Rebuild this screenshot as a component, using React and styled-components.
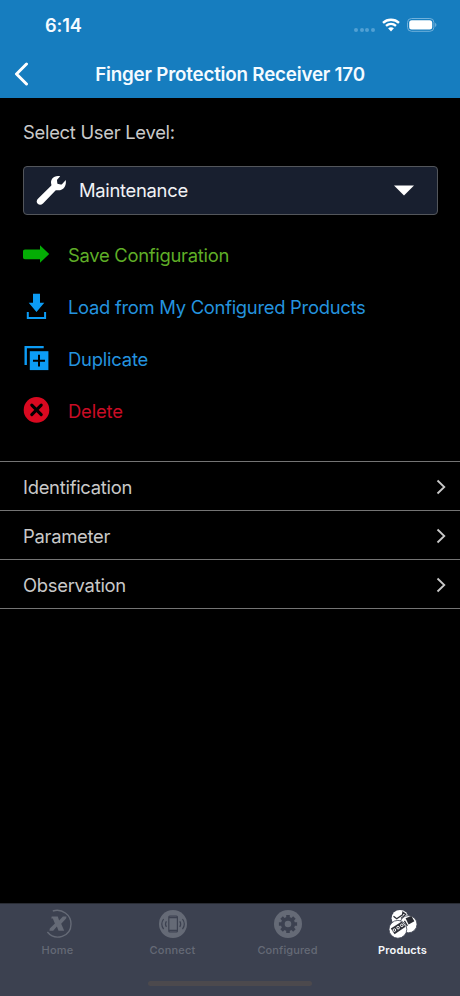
import React from "react";
import styled, { createGlobalStyle } from "styled-components";

const GlobalStyle = createGlobalStyle`
  * { box-sizing: border-box; }
  body { margin: 0; background: #000; }
  button { font: inherit; color: inherit; background: none; border: 0; padding: 0; text-align: left; }
  svg { display: block; flex: none; }
`;

const Screen = styled.div`
  width: 460px;
  height: 996px;
  display: flex;
  flex-direction: column;
  overflow: hidden;
  background: #000;
  font-family: Inter, "Liberation Sans", sans-serif;
  font-size: 18.4px;
  line-height: 24px;
  color: #c9c9c9;
`;

const Header = styled.header`
  height: 98px;
  flex: none;
  background: #167dbf;
  color: #f4fbff;
`;

const StatusBar = styled.div`
  height: 50px;
  padding: 0 23px 0 45px;
  display: flex;
  align-items: center;
  justify-content: space-between;
`;

const Clock = styled.span`
  font-size: 18.2px;
  font-weight: 600;
  letter-spacing: -0.1px;
`;

const StatusIcons = styled.div`
  display: flex;
  align-items: center;
`;

const Dots = styled.div`
  display: flex;
  gap: 1.7px;
  margin: 9px 7px 0 0;
`;

const Dot = styled.i`
  width: 4px;
  height: 4px;
  border-radius: 50%;
  background: #51a0d4;
`;

const TitleBar = styled.div`
  height: 48px;
  display: grid;
  grid-template-columns: 46px 1fr 46px;
  align-items: center;
`;

const BackButton = styled.button`
  padding-left: 14px;
`;

const Title = styled.h1`
  margin: 0;
  padding-top: 1px;
  text-align: center;
  white-space: nowrap;
  font-size: 18.8px;
  font-weight: 600;
  letter-spacing: -0.2px;
`;

const Main = styled.main`
  flex: 1;
`;

const Label = styled.div`
  padding: 22px 23px 0;
  height: 68px;
  letter-spacing: -0.28px;
`;

const Select = styled.button`
  width: 415px;
  height: 49px;
  margin-left: 22.5px;
  padding: 0 22.5px 0 12px;
  display: flex;
  align-items: center;
  border: 1px solid #53565b;
  border-radius: 4px;
  background: #181f2f;
  color: #f1f2f5;
`;

const SelectValue = styled.span`
  flex: 1;
  margin-left: 12.5px;
  padding-bottom: 2px;
  letter-spacing: -0.3px;
`;

const Actions = styled.div`
  padding: 14px 22px 0;
  height: 246px;
`;

const Action = styled.button`
  width: 100%;
  height: 51.8px;
  display: flex;
  align-items: center;
  gap: 18px;
  color: ${(p) => p.$color};
  letter-spacing: ${(p) => p.$tracking}px;

  span { padding-top: 1px; }
`;

const Menu = styled.nav`
  border-top: 1px solid #747474;
`;

const MenuRow = styled.button`
  width: 100%;
  height: 49px;
  padding: 2px 14px 0 23px;
  display: flex;
  align-items: center;
  justify-content: space-between;
  border-bottom: 1px solid #747474;
  letter-spacing: ${(p) => p.$tracking}px;
`;

const Footer = styled.footer`
  height: 93px;
  flex: none;
  display: flex;
  flex-direction: column;
  align-items: center;
  background: #3c4150;
  border-top: 1px solid #292c34;
`;

const Tabs = styled.div`
  width: 100%;
  height: 77px;
  display: grid;
  grid-template-columns: repeat(4, 1fr);
`;

const Tab = styled.button`
  display: flex;
  flex-direction: column;
  align-items: center;
  padding-top: 5px;
  color: ${(p) => (p.$active ? "#f5f7fa" : "#656a76")};
  font-size: 11px;
  font-weight: ${(p) => (p.$active ? 600 : 500)};
  line-height: 14px;
  letter-spacing: ${(p) => p.$tracking}px;

  svg { margin-bottom: 4px; }
`;

const HomeIndicator = styled.div`
  width: 164px;
  height: 5px;
  border-radius: 3px;
  background: #4c494d;
`;

const Wifi = () => (
  <svg width="18" height="14" viewBox="0 0 18 14" fill="none" stroke="#fff" strokeWidth="2.4">
    <path d="M1 4.8C5.5.7 12.5.7 17 4.8M4 7.8c3-2.6 7-2.6 10 0" />
    <path d="M6.1 10.3c1.7-1.5 4.1-1.5 5.8 0L9 13.5z" fill="#fff" stroke="none" />
  </svg>
);

const Battery = () => (
  <svg width="30" height="14" viewBox="0 0 30 14">
    <rect x=".5" y=".5" width="26.4" height="12.8" rx="4" fill="none" stroke="#70b1db" />
    <rect x="2.2" y="2.2" width="23" height="9.4" rx="2.5" fill="#fff" />
    <path d="M28.1 4.8c1.8.8 1.8 3.4 0 4.2z" fill="#70b1db" />
  </svg>
);

const StatusBattery = styled.div`
  margin-left: 7px;
`;

const BackIcon = () => (
  <svg width="16" height="24" viewBox="0 0 16 24" fill="none" stroke="#fff" strokeWidth="3" strokeLinecap="round" strokeLinejoin="round">
    <path d="M12.5 2 2.5 12l10 10" />
  </svg>
);

const Wrench = () => (
  <svg width="31" height="31" viewBox="0 0 31 31" fill="#fff">
    <path d="M24.2 1.2c-3.4-.7-6.3.2-7.9 2.4-1.4 1.9-1.6 4-.9 6.1.1.4 0 .8-.3 1.1L2.2 23.5c-1.8 1.8-2 3.7-.5 5.2s3.5 1.5 5.3-.2L19.5 15.6c.4-.4.8-.5 1.4-.4 3.2.4 6.2-.8 7.7-3.3 1.1-1.8 1.5-3.8 1.2-6.9l-3.6 3.9c-.4.5-.8.7-1.5.6l-2.3-.4c-.7-.1-1-.4-1.1-1.1l-.3-2.5c0-.5.1-.8.5-1.2z" />
  </svg>
);

const DownTriangle = () => (
  <svg width="20" height="11" viewBox="0 0 20 11"><path d="M0 .5h20L10 10.5z" fill="#fff" /></svg>
);

const SaveIcon = () => (
  <svg width="28" height="28" viewBox="0 0 28 28">
    <path d="M3 8.6h15V4.2L27.2 13 18 21.8v-3.6H3c-1.3 0-2-.7-2-2v-5.6c0-1.3.7-2 2-2z" fill="#04ad05" />
  </svg>
);

const LoadIcon = () => (
  <svg width="28" height="28" viewBox="0 0 28 28">
    <path d="M11 .8h7v9h4.3L14.5 19 6.7 9.8H11z" fill="#0c9cf5" />
    <path d="M5.8 19v5.9h17.3V19" fill="none" stroke="#0c9cf5" strokeWidth="2" />
  </svg>
);

const DuplicateIcon = () => (
  <svg width="28" height="28" viewBox="0 0 28 28">
    <path d="M3.7 20.9V3.1h18" fill="none" stroke="#0c9cf5" strokeWidth="2.4" />
    <path d="M7.8 7.2h18.6v18.9H7.8z" fill="#0c9cf5" />
    <path d="M17 10.8v11.8M11 16.7h12" stroke="#000" strokeWidth="2" />
  </svg>
);

const DeleteIcon = () => (
  <svg width="28" height="28" viewBox="0 0 28 28">
    <circle cx="14.5" cy="13.9" r="12.8" fill="#d90920" />
    <path d="m9.8 9.2 9.4 9.4m0-9.4-9.4 9.4" stroke="#000" strokeWidth="3.1" strokeLinecap="round" />
  </svg>
);

const Chevron = () => (
  <svg width="10" height="16" viewBox="0 0 10 16" fill="none" stroke="#c9c9c9" strokeWidth="1.8">
    <path d="M1.5 1.5 8.3 8l-6.8 6.5" />
  </svg>
);

const HomeIcon = () => (
  <svg width="30" height="30" viewBox="0 0 30 30">
    <path d="M9.8 2C19-.7 28 5.6 28 15c0 12.6-15.6 17.6-23.6 8" fill="none" stroke="#656a76" strokeWidth="1.4" />
    <path d="M8.7 7.4h6.1l1.3 4.2 3.8-4.2h3.6l-.4 2.2-4.9 5.1 3 7h-5.7l-1.6-4.2-3.7 4.2H6.4l.4-2.3 5.1-5-2.1-4.8H8.3z" fill="#656a76" />
  </svg>
);

const ConnectIcon = () => (
  <svg width="30" height="30" viewBox="0 0 30 30">
    <circle cx="15" cy="15" r="14" fill="#656a76" />
    <g fill="none" stroke="#3c4150" strokeWidth="1.2">
      <rect x="10.8" y="7" width="8.6" height="16" rx="1" />
      <path d="M11 8.5h8M11 21.5h8" strokeWidth="1.7" />
      <path d="M8.4 12.2c-1.2 1.9-1.2 3.9 0 5.8M5.6 10c-2.3 3.2-2.3 7 0 10.2M21.8 12.2c1.2 1.9 1.2 3.9 0 5.8M24.5 10c2.3 3.2 2.3 7 0 10.2" />
    </g>
  </svg>
);

const ConfiguredIcon = () => (
  <svg width="30" height="30" viewBox="0 0 30 30">
    <circle cx="15" cy="15" r="14" fill="#656a76" />
    <circle cx="15" cy="15" r="5.2" fill="none" stroke="#3c4150" strokeWidth="3.8" />
    <g stroke="#3c4150" strokeWidth="3.6">
      <path d="M15 5.9v3M15 21.1v3M5.9 15h3M21.1 15h3M8.6 8.6l2.1 2.1M19.3 19.3l2.1 2.1M8.6 21.4l2.1-2.1M19.3 10.7l2.1-2.1" />
    </g>
  </svg>
);

const ProductsIcon = () => (
  <svg width="30" height="30" viewBox="0 0 30 30">
    <circle cx="12" cy="9.3" r="8.4" fill="#fff" />
    <path d="m5.5 7.2 3.2 2.6 5.8-4 .4-2.6 2.8 2.2-4.6 4.2" fill="none" stroke="#30323a" strokeWidth="1.3" />
    <circle cx="20.4" cy="15.2" r="8.6" fill="#fff" stroke="#3c4150" strokeWidth=".8" />
    <path d="m17.6 9.2 5.8-2.3 3 5.4-5.8 3.2z" fill="#292b32" />
    <path d="m16.4 11.8 3 5" stroke="#292b32" strokeWidth="1.3" />
    <circle cx="9.9" cy="20.3" r="8.9" fill="#fff" stroke="#3c4150" strokeWidth=".8" />
    <path d="M2.8 19.6 13.8 12.5l3.8 5.2L6.6 25.2z" fill="#30323a" />
    <g fill="none" stroke="#fff" strokeWidth="1">
      <circle cx="6.4" cy="21.1" r="1.3" /><circle cx="10.1" cy="18.7" r="1.3" /><circle cx="13.8" cy="16.3" r="1.3" />
    </g>
  </svg>
);

const actions = [
  { text: "Save Configuration", color: "#5fae27", tracking: -0.28, Icon: SaveIcon },
  { text: "Load from My Configured Products", color: "#2493df", tracking: -0.28, Icon: LoadIcon },
  { text: "Duplicate", color: "#2493df", tracking: -0.2, Icon: DuplicateIcon },
  { text: "Delete", color: "#c90c25", tracking: -0.15, Icon: DeleteIcon },
];

const sections = ["Identification", "Parameter", "Observation"];

const tabs = [
  { text: "Home", tracking: 0.25, Icon: HomeIcon },
  { text: "Connect", tracking: 0.2, Icon: ConnectIcon },
  { text: "Configured", tracking: 0.12, Icon: ConfiguredIcon },
  { text: "Products", tracking: 0.15, Icon: ProductsIcon, active: true },
];

export default function App() {
  return (
    <>
      <GlobalStyle />
      <Screen>
        <Header>
          <StatusBar>
            <Clock>6:14</Clock>
            <StatusIcons>
              <Dots><Dot /><Dot /><Dot /><Dot /></Dots>
              <Wifi />
              <StatusBattery><Battery /></StatusBattery>
            </StatusIcons>
          </StatusBar>
          <TitleBar>
            <BackButton aria-label="Back"><BackIcon /></BackButton>
            <Title>Finger Protection Receiver 170</Title>
          </TitleBar>
        </Header>
        <Main>
          <Label>Select User Level:</Label>
          <Select>
            <Wrench />
            <SelectValue>Maintenance</SelectValue>
            <DownTriangle />
          </Select>
          <Actions>
            {actions.map(({ text, color, tracking, Icon }) => (
              <Action key={text} $color={color} $tracking={tracking}>
                <Icon />
                <span>{text}</span>
              </Action>
            ))}
          </Actions>
          <Menu>
            {sections.map((text) => (
              <MenuRow key={text} $tracking={-0.27}>
                {text}
                <Chevron />
              </MenuRow>
            ))}
          </Menu>
        </Main>
        <Footer>
          <Tabs>
            {tabs.map(({ text, tracking, Icon, active }) => (
              <Tab key={text} $tracking={tracking} $active={active}>
                <Icon />
                {text}
              </Tab>
            ))}
          </Tabs>
          <HomeIndicator />
        </Footer>
      </Screen>
    </>
  );
}
